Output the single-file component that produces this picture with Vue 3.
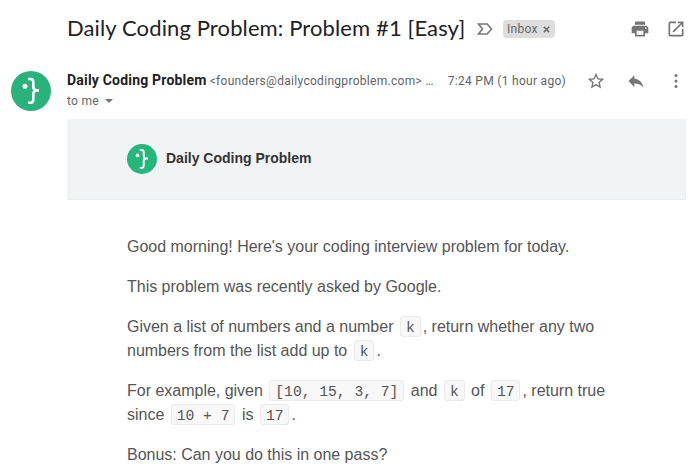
<script setup>
const sender = 'Daily Coding Problem'
</script>

<template>
  <main class="mail">
    <header class="subject">
      <h1>Daily Coding Problem: Problem #1 [Easy]</h1>
      <svg class="marker" width="16" height="12" viewBox="0 0 16 12"><path d="M1.500 1h8.700L14.500 6l-4.300 5H1.500l4-5z" fill="none" stroke="#777" stroke-width="1.600" /></svg>
      <span class="label">Inbox <svg width="7" height="7" viewBox="0 0 7 7"><path d="M.8.8l5.400 5.400M6.200.8L.8 6.200" stroke="#666" stroke-width="1.500" /></svg></span>
      <svg class="print" width="20" height="20" viewBox="0 0 24 24"><path fill="#757575" d="M19 8H5c-1.660 0-3 1.340-3 3v6h4v4h12v-4h4v-6c0-1.660-1.340-3-3-3zm-3 11H8v-5h8v5zm3-7c-.55 0-1-.45-1-1s.45-1 1-1 1 .45 1 1-.45 1-1 1zm-1-9H6v4h12V3z" /></svg>
      <svg class="open" width="20" height="20" viewBox="0 0 24 24"><path fill="#757575" d="M19 19H5V5h7V3H5a2 2 0 0 0-2 2v14a2 2 0 0 0 2 2h14c1.100 0 2-.9 2-2v-7h-2v7zM14 3v2h3.590l-9.830 9.830 1.410 1.410L19 6.410V10h2V3h-7z" /></svg>
    </header>

    <section class="meta">
      <svg class="avatar" width="40" height="40" viewBox="0 0 40 40">
        <circle cx="20" cy="20" r="20" fill="#2ab27d" />
        <circle cx="14" cy="15.200" r="2.500" fill="#fff" />
        <path d="M17 8h2.300q3 0 3 3v4.500q0 3.700 3.400 3.900h2.300h-2.300q-3.400.2-3.400 3.900v5.300q0 3.200-3 3.200h-2.300" fill="none" stroke="#fff" stroke-width="2.600" />
      </svg>
      <div class="who">
        <div class="line">
          <b>{{ sender }}</b>
          <span class="address">&lt;founders@dailycodingproblem.com&gt; …</span>
          <time>7:24 PM (1 hour ago)</time>
        </div>
        <div class="to">to me <i class="caret"></i></div>
      </div>
      <div class="actions">
        <svg width="20" height="20" viewBox="0 0 24 24"><path fill="#757575" d="M22 9.240l-7.190-.62L12 2 9.190 8.630 2 9.240l5.460 4.730L5.820 21 12 17.270 18.180 21l-1.630-7.030L22 9.240zM12 15.400l-3.760 2.270 1-4.280-3.320-2.880 4.380-.38L12 6.100l1.710 4.040 4.380.38-3.320 2.880 1 4.280L12 15.400z" /></svg>
        <svg width="20" height="20" viewBox="0 0 24 24"><path fill="#757575" d="M10 9V5l-7 7 7 7v-4.100c5 0 8.500 1.600 11 5.100-1-5-4-10-11-11z" transform="translate(0 .1)" /></svg>
        <svg width="20" height="20" viewBox="0 0 24 24"><g fill="#757575"><circle cx="12" cy="5.400" r="1.800" /><circle cx="12" cy="12" r="1.800" /><circle cx="12" cy="18.600" r="1.800" /></g></svg>
      </div>
    </section>

    <section class="banner">
      <svg width="30" height="30" viewBox="0 0 40 40">
        <circle cx="20" cy="20" r="20" fill="#25b67c" />
        <circle cx="14" cy="15.200" r="2.500" fill="#fff" />
        <path d="M17 8h2.300q3 0 3 3v4.500q0 3.700 3.400 3.900h2.300h-2.300q-3.400.2-3.400 3.900v5.300q0 3.200-3 3.200h-2.300" fill="none" stroke="#fff" stroke-width="2.600" />
      </svg>
      <strong>{{ sender }}</strong>
    </section>

    <article class="body">
      <p>Good morning! Here's your coding interview problem for today.</p>
      <p>This problem was recently asked by Google.</p>
      <p>Given a list of numbers and a number <code>k</code>, return whether any two<br>numbers from the list add up to <code>k</code>.</p>
      <p>For example, given <code>[10, 15, 3, 7]</code> and <code>k</code> of <code>17</code>, return true<br>since <code>10 + 7</code> is <code>17</code>.</p>
      <p>Bonus: Can you do this in one pass?</p>
    </article>
  </main>
</template>

<style>
body { margin: 0; background: #fff; }
</style>

<style scoped>
.mail { width: 695px; height: 476px; overflow: hidden; background: #fff; font-family: Roboto, sans-serif; color: #222; }
svg { display: block; flex: none; }
.subject { display: flex; align-items: center; height: 58px; padding: 0 9px 0 67px; box-sizing: border-box; }
h1 { margin: 0; padding-bottom: 2px; width: 398px; font: 400 22px/28px Lato, sans-serif; letter-spacing: .12px; white-space: nowrap; color: #202124; }
.marker { margin-left: 12px; }
.label { display: flex; align-items: center; gap: 5px; height: 18px; margin-left: 10px; width: 52px; padding-left: 4px; box-sizing: border-box; border-radius: 4px; background: #ddd; color: #666; font-size: 12px; letter-spacing: .3px; }
.print { margin-left: auto; }
.open { margin-left: 16px; }
.meta { display: flex; height: 61px; padding: 13px 9px 0 11px; box-sizing: border-box; }
.who { width: 520px; margin-left: 16px; white-space: nowrap; }
.line { display: flex; align-items: baseline; height: 20px; line-height: 18px; }
b { font-size: 14px; letter-spacing: .2px; color: #202124; }
.address { margin-left: 3px; }
.address, time, .to { font-size: 12px; letter-spacing: .3px; color: #5f6368; }
time { margin-left: 14px; }
.to { display: flex; align-items: center; height: 20px; line-height: 20px; }
.caret { margin-left: 6px; border: 4px solid transparent; border-top-color: #757575; border-bottom: 0; }
.actions { display: flex; gap: 20px; margin-left: -1px; }
.banner { display: flex; align-items: center; width: 619px; height: 81px; margin-left: 67px; padding-left: 60px; box-sizing: border-box; background: #f2f3f5; border-bottom: 1px solid #e9eaec; }
strong { margin-left: 9px; padding-bottom: 2px; font: 700 14px/20px "Liberation Sans", sans-serif; color: #333; }
.body { padding: 35px 0 0 127px; font: 16px/24px "Liberation Sans", sans-serif; letter-spacing: -.01px; color: #555; white-space: nowrap; }
p { margin: 0 0 16px; }
code { display: inline-block; height: 19px; margin: 0 2px; padding: 0 5px; border: 1px solid #eaeaea; border-radius: 3px; background: #f8f8f8; font: 14.660px/23px "Liberation Mono", monospace; }
</style>
